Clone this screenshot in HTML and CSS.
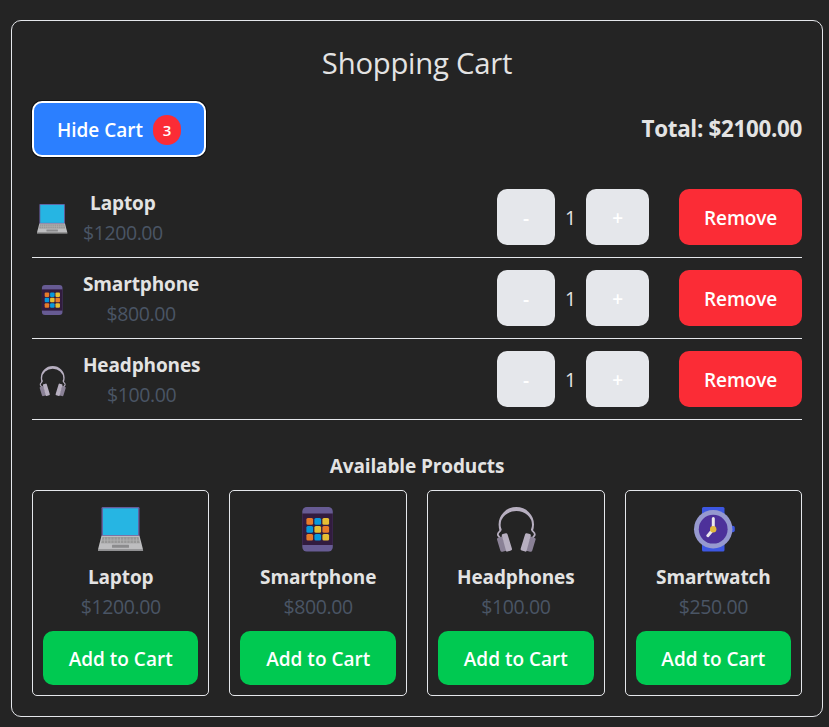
FILE: index.html
```html
<!DOCTYPE html>
<html lang="en">
<head>
<meta charset="utf-8">
<title>Shopping Cart</title>
<link rel="stylesheet" href="styles.css">
</head>
<body>
<svg class="sprite" aria-hidden="true">
  <symbol id="laptop" viewBox="0.5 0.5 46 46">
    <rect x="4" y="0.5" width="38" height="30" rx="1.2" fill="#675b9b"/>
    <rect x="5.4" y="1.8" width="35.2" height="26.7" fill="#26b5e3"/>
    <path d="M4 29.3h38l3.6 14H0.4z" fill="#bdbdbf"/>
    <path d="M5 30.5h36l1.4 6.3H3.6z" fill="#989898"/>
    <path d="M7 31v5.8M10.2 31v5.8M13.4 31v5.8M16.6 31v5.8M19.8 31v5.8M23 31v5.8M26.2 31v5.8M29.4 31v5.8M32.6 31v5.8M35.8 31v5.8M39 31v5.8M4.5 33.6h37" stroke="#b3b3b3" stroke-width=".8"/>
    <rect x="14.5" y="38.2" width="17" height="3" rx=".5" fill="#8b8b8d"/>
    <path d="M0.4 43.3h45.2v1.2H0.4z" fill="#919193"/>
  </symbol>
  <symbol id="phone" viewBox="0.5 0.5 46 46">
    <rect x="7.8" y="0.5" width="30.5" height="44.5" rx="4.5" fill="#675b93"/>
    <rect x="7.8" y="7" width="30.5" height="31.5" fill="#321c3f"/>
    <g fill="#e87b29"><rect x="11.9" y="11.6" width="6.7" height="6.7" rx="1.5"/><rect x="27.9" y="19.5" width="6.7" height="6.7" rx="1.5"/><rect x="11.9" y="27.4" width="6.7" height="6.7" rx="1.5"/></g>
    <g fill="#0799dc"><rect x="19.9" y="11.6" width="6.7" height="6.7" rx="1.5"/><rect x="11.9" y="19.5" width="6.7" height="6.7" rx="1.5"/><rect x="19.9" y="27.4" width="6.7" height="6.7" rx="1.5"/></g>
    <g fill="#e5bf34"><rect x="27.9" y="11.6" width="6.7" height="6.7" rx="1.5"/><rect x="19.9" y="19.5" width="6.7" height="6.7" rx="1.5"/><rect x="27.9" y="27.4" width="6.7" height="6.7" rx="1.5"/></g>
  </symbol>
  <symbol id="headphones" viewBox="-.3 0.5 46 46">
    <path fill-rule="evenodd" d="M6.4 24.5Q5.3 21 5.3 18A17.7 17.5 0 0 1 40.7 18Q40.7 21 39.6 24.5L37.9 22.5Q38.7 20 38.7 18.5A15.7 14 0 0 0 7.3 18.5Q7.3 20 8.1 22.5z" fill="#b7afc0"/>
    <path d="M7.3 22.5c1 2.6-3.8 2.8-2.6 6.2l2.3 3M38.7 22.5c-1 2.6 3.8 2.8 2.6 6.2l-2.3 3" fill="none" stroke="#b7afc0" stroke-width="1.8"/>
    <path d="M4.4 31.5 9 29.8l4.6 14.2-4.3 1.2q-1.8.4-2.3-1.2L3.7 33q-.3-1.1.7-1.5zM41.6 31.5 37 29.8l-4.6 14.2 4.3 1.2q1.8.4 2.3-1.2L42.3 33q.3-1.1-.7-1.5z" fill="#8a8196"/>
    <path d="m9.5 27.5 3-.8q1.2-.3 1.7 1l4.4 14.2q.5 1.6-1 2l-3.5 1.2q-1 .3-1.4-.8L8.5 29q-.3-1.2 1-1.5zM36.5 27.5l-3-.8q-1.2-.3-1.7 1l-4.4 14.2q-.5 1.6 1 2l3.5 1.2q1 .3 1.4-.8L37.5 29q.3-1.2-1-1.5z" fill="#b7afc0"/>
  </symbol>
  <symbol id="watch" viewBox="0 0.5 46 46">
    <rect x="12" y="0.5" width="22.5" height="44.5" rx="1.5" fill="#3d57e2"/>
    <rect x="40" y="19.3" width="4.8" height="6.5" rx="2" fill="#3d57e2"/>
    <circle cx="23.2" cy="22.7" r="19.2" fill="#9699cf"/>
    <circle cx="23.2" cy="22.7" r="14.4" fill="#4d319a"/>
    <path d="M23.3 12v10.7l-5.5 6.5" fill="none" stroke="#ebe8ec" stroke-width="3" stroke-linecap="round"/>
    <circle cx="23.2" cy="22.7" r="3.2" fill="#e3ba3c"/>
  </symbol>
</svg>
<main class="shop">
  <h1>Shopping Cart</h1>
  <div class="bar">
    <button class="btn toggle"><span>Hide Cart</span><span class="count">3</span></button>
    <div class="total">Total: $2100.00</div>
  </div>
  <ul class="cart">
    <li class="row">
      <svg class="thumb"><use href="#laptop"/></svg>
      <div class="info"><h3>Laptop</h3><p>$1200.00</p></div>
      <button class="btn qty minus">-</button><span class="num">1</span><button class="btn qty plus">+</button>
      <button class="btn remove">Remove</button>
    </li>
    <li class="row">
      <svg class="thumb"><use href="#phone"/></svg>
      <div class="info"><h3>Smartphone</h3><p>$800.00</p></div>
      <button class="btn qty minus">-</button><span class="num">1</span><button class="btn qty plus">+</button>
      <button class="btn remove">Remove</button>
    </li>
    <li class="row">
      <svg class="thumb"><use href="#headphones"/></svg>
      <div class="info"><h3>Headphones</h3><p>$100.00</p></div>
      <button class="btn qty minus">-</button><span class="num">1</span><button class="btn qty plus">+</button>
      <button class="btn remove">Remove</button>
    </li>
  </ul>
  <h2>Available Products</h2>
  <div class="grid">
    <div class="card"><svg class="pic"><use href="#laptop"/></svg><h3>Laptop</h3><p>$1200.00</p><button class="btn add">Add to Cart</button></div>
    <div class="card"><svg class="pic"><use href="#phone"/></svg><h3>Smartphone</h3><p>$800.00</p><button class="btn add">Add to Cart</button></div>
    <div class="card"><svg class="pic"><use href="#headphones"/></svg><h3>Headphones</h3><p>$100.00</p><button class="btn add">Add to Cart</button></div>
    <div class="card"><svg class="pic"><use href="#watch"/></svg><h3>Smartwatch</h3><p>$250.00</p><button class="btn add">Add to Cart</button></div>
  </div>
</main>
</body>
</html>
```
FILE: styles.css
```css
* { box-sizing: border-box; margin: 0; padding: 0; }
body {
  background: #242424;
  color: #e3e3e3;
  font: 400 19.5px/30px "Open Sans", sans-serif;
  padding: 20px 5.9px 10px 10.9px;
  text-align: center;
}
.sprite { display: none; }
svg { display: block; flex: none; }
.shop {
  height: 697px;
  border: 1px solid #e5e7eb;
  border-radius: 10px;
  padding: 20px;
}
h1 { font-size: 29.3px; font-weight: 400; line-height: 40px; letter-spacing: -.25px; margin-bottom: 20px; padding-top: 2px; height: 40px; }
h2, h3 { font-size: 19px; font-weight: 700; letter-spacing: -.12px; line-height: 30px; }
p { color: #4a5565; letter-spacing: -.4px; }
.bar { display: flex; justify-content: space-between; align-items: center; height: 56px; margin-bottom: 20px; }
.total { font-size: 22.4px; font-weight: 700; letter-spacing: -.3px; }
.btn {
  border: 0;
  border-radius: 10px;
  color: #fff;
  font: 600 19px/30px "Open Sans", sans-serif;
  height: 56px;
}
.toggle {
  display: flex;
  align-items: center;
  width: 174px;
  padding: 2px 0 0 23px;
  gap: 10px;
  background: #2b7fff;
  border: 2px solid #fff;
  box-shadow: 0 0 0 1px #101010;
}
.count { width: 28px; height: 30px; border-radius: 14px; background: #fb2c36; font-size: 15px; }
.cart { list-style: none; margin-bottom: 31px; }
.row { display: flex; align-items: center; height: 81px; border-bottom: 1px solid #e5e7eb; }
.thumb { width: 31px; height: 31px; margin: 4px 15px 0 5px; }
.info { margin-right: auto; padding-top: 2px; }
.qty { background: #e5e7eb; padding-top: 2px; }
.minus { width: 58px; }
.num { width: 31px; padding-top: 2px; }
.plus { width: 63px; margin-right: 30px; }
.remove { width: 123px; background: #fb2c36; letter-spacing: -.15px; padding-top: 2px; }
.grid { display: grid; grid-template-columns: repeat(4, 1fr); gap: 20px; margin-top: 9px; }
.card { border: 1px solid #e5e7eb; border-radius: 5px; height: 206px; padding: 16px 10px 10px; }
.pic { width: 46px; height: 46px; margin: 0 auto 9px; }
.add { width: 100%; height: 54px; margin-top: 9px; padding-top: 2px; background: #00c951; }
```
